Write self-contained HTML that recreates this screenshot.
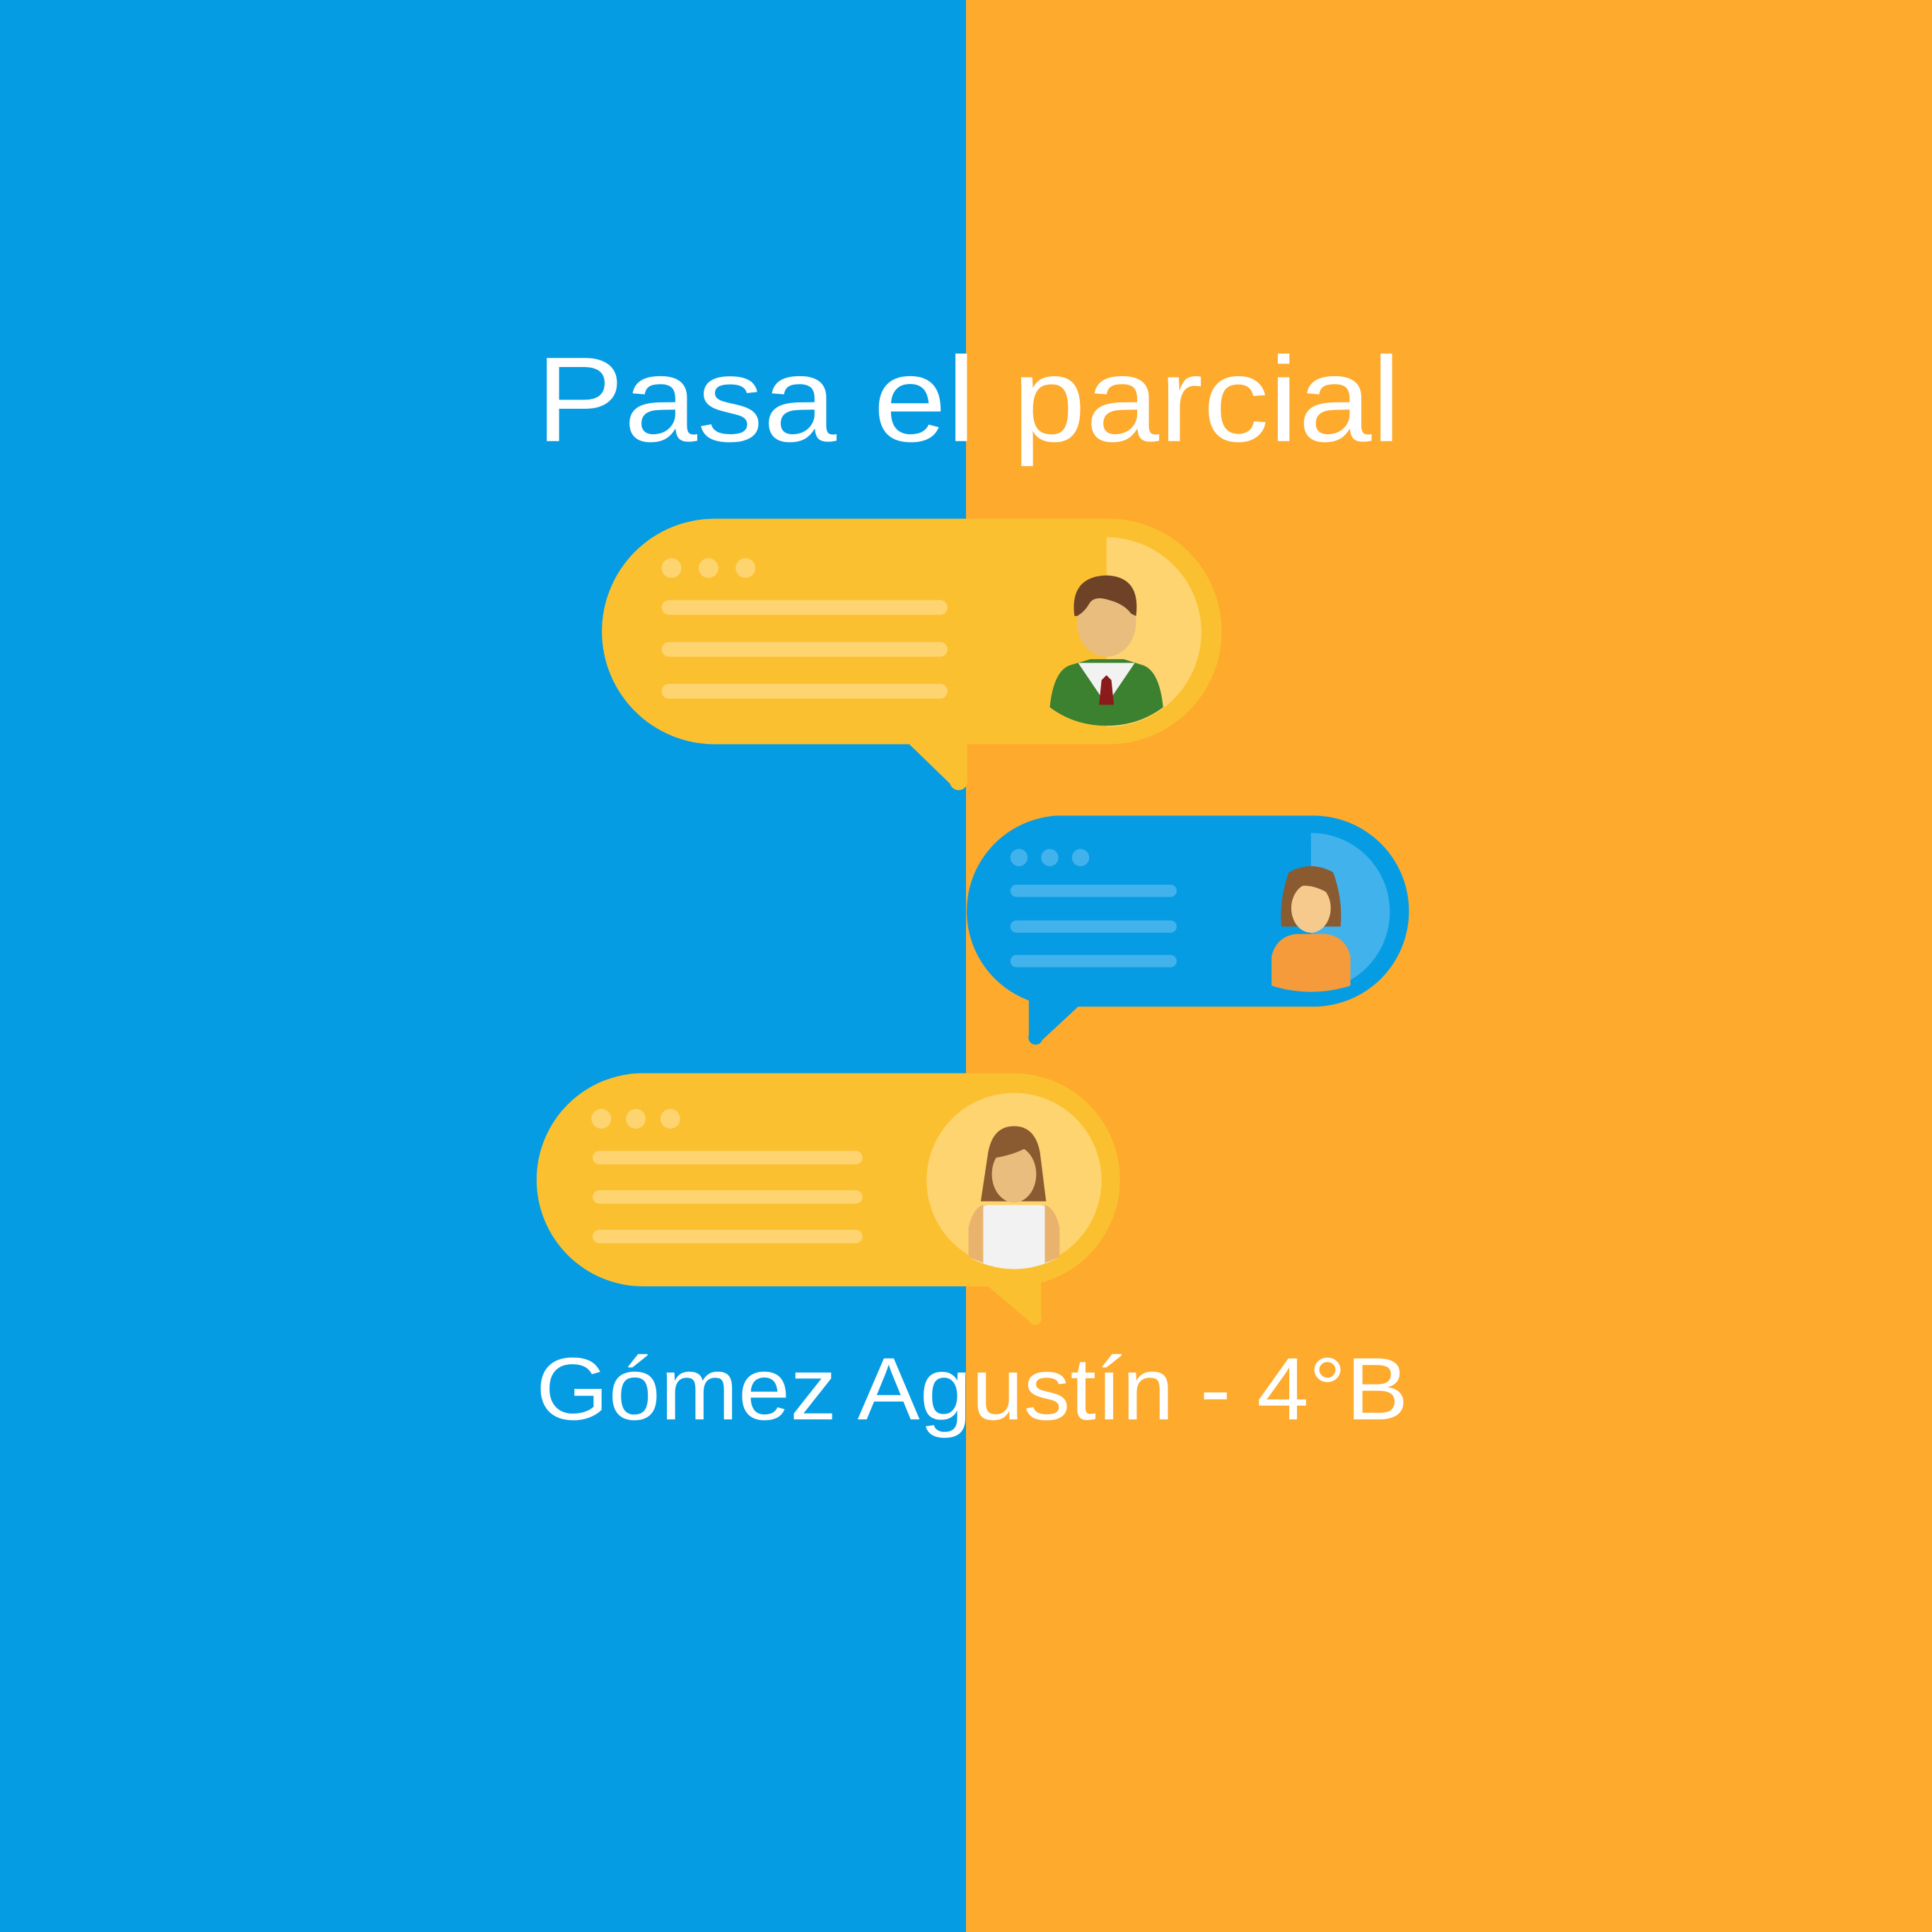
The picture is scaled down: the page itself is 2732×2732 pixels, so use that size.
<!DOCTYPE html>
<html><head><meta charset="utf-8"><style>html,body{margin:0;padding:0;background:#069ce4}svg{display:block}</style></head>
<body>
<svg width="2732" height="2732" viewBox="0 0 1568 1568" xmlns="http://www.w3.org/2000/svg">
<rect x="0" y="0" width="784" height="1568" fill="#069ce4"/>
<rect x="784" y="0" width="784" height="1568" fill="#fdaa2d"/>
<text x="435" y="358" font-family="Liberation Sans, sans-serif" font-size="98" fill="#fff" textLength="702" lengthAdjust="spacingAndGlyphs">Pasa el parcial</text>

<!-- Bubble 1 -->
<path d="M580 421 H900 A91.5 91.5 0 0 1 900 604 H785 V632 A5 5 0 0 1 771 636 L738 604 H580 A91.5 91.5 0 0 1 580 421 Z" fill="#fbc02f"/>
<path d="M898 436 A77 77 0 0 1 898 590 Z" fill="#fdd470"/>
<path d="M898 436 A77 77 0 0 0 898 590 Z" fill="#fbc02f"/>
<g fill="#fdd470"><circle cx="545" cy="461" r="8"/><circle cx="575" cy="461" r="8"/><circle cx="605" cy="461" r="8"/>
<rect x="537" y="487" width="232" height="12" rx="6"/><rect x="537" y="521" width="232" height="12" rx="6"/><rect x="537" y="555" width="232" height="12" rx="6"/></g>
<!-- man -->
<path d="M852 574 Q855 545 868 540 L885 535 H912 L928 540 Q941 545 944 574 Q924 589 898 589 Q872 589 852 574Z" fill="#3b8130"/>
<path d="M875 538 L898 572 L921 538 Z" fill="#f2f2f2"/>
<path d="M894 552 L898 548 L902 552 L904 572 H892Z" fill="#8b1a1a"/>
<ellipse cx="898" cy="505" rx="24" ry="28" fill="#e9bd7e"/>
<path d="M872 500 Q868 468 898 467 Q926 468 922 500 L918 498 Q912 490 900 487 Q888 483 884 490 Q880 497 874 500Z" fill="#6e4226"/>

<!-- Bubble 2 -->
<path d="M858 662 H1066 A77.5 77.5 0 0 1 1066 817 H875 L846 844 A5 5 0 0 1 835 840 V812 A77.5 77.5 0 0 1 858 662 Z" fill="#069ce4"/>
<path d="M1064 676 A64 64 0 0 1 1064 804 Z" fill="#41b2ec"/>
<g fill="#41b2ec"><circle cx="827" cy="696" r="7"/><circle cx="852" cy="696" r="7"/><circle cx="877" cy="696" r="7"/>
<rect x="820" y="718" width="135" height="10" rx="5"/><rect x="820" y="747" width="135" height="10" rx="5"/><rect x="820" y="775" width="135" height="10" rx="5"/></g>
<!-- woman 2 -->
<path d="M1046 708 Q1064 698 1082 708 Q1090 730 1088 752 H1040 Q1038 730 1046 708Z" fill="#8a5a30"/>
<path d="M1032 776 Q1036 760 1052 758 H1076 Q1092 760 1096 776 V800 Q1080 805 1064 805 Q1048 805 1032 800Z" fill="#f59b3c"/>
<ellipse cx="1064" cy="737" rx="16" ry="20" fill="#f6c98d"/>
<path d="M1048 722 Q1060 714 1080 726 L1082 716 Q1064 704 1046 716Z" fill="#8a5a30"/>

<!-- Bubble 3 -->
<path d="M522 871 H824 A86.5 86.5 0 0 1 845 1041 V1068 A5 5 0 0 1 835 1072 L802 1044 H522 A86.5 86.5 0 0 1 522 871 Z" fill="#fbc02f"/>
<circle cx="823" cy="958" r="71" fill="#fdd470"/>
<g fill="#fdd470"><circle cx="488" cy="908" r="8"/><circle cx="516" cy="908" r="8"/><circle cx="544" cy="908" r="8"/>
<rect x="481" y="934" width="219" height="11" rx="5.5"/><rect x="481" y="966" width="219" height="11" rx="5.5"/><rect x="481" y="998" width="219" height="11" rx="5.5"/></g>
<!-- woman 3 -->
<path d="M802 935 Q806 914 823 914 Q840 914 844 935 L849 975 H796Z" fill="#8a5a30"/>
<path d="M786 996 Q790 980 802 978 H844 Q856 980 860 996 V1020 Q842 1030 823 1030 Q804 1030 786 1020Z" fill="#f2f2f2"/>
<path d="M786 996 Q790 980 798 978 V1025 Q790 1022 786 1020Z M860 996 Q856 980 848 978 V1025 Q856 1022 860 1020Z" fill="#e9b36e"/>
<ellipse cx="823" cy="953" rx="18" ry="23" fill="#e9bd7e"/>
<path d="M805 940 Q822 938 836 930 L842 940 L840 925 Q823 912 806 926Z" fill="#8a5a30"/>

<text x="435" y="1152" font-family="Liberation Sans, sans-serif" font-size="72" fill="#fff" textLength="708" lengthAdjust="spacingAndGlyphs">Gómez Agustín - 4°B</text>
</svg>
</body></html>
